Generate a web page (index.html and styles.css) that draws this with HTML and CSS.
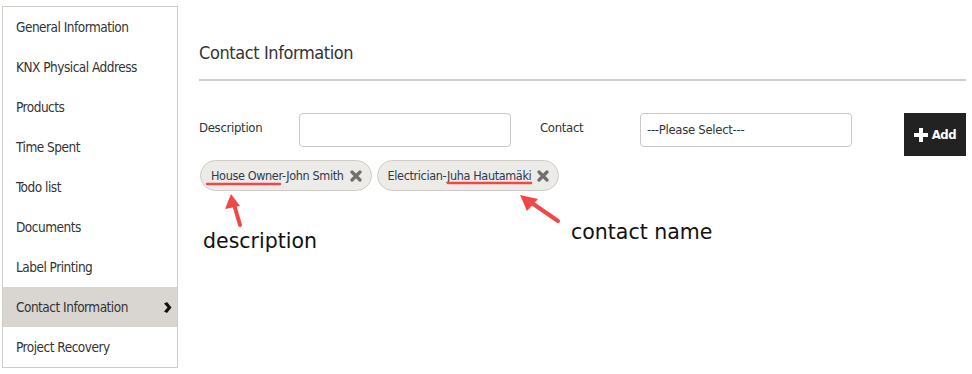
FILE: index.html
```html
<!DOCTYPE html>
<html lang="en">
<head>
    <meta charset="UTF-8">
    <title>Contact Information</title>
    <link rel="stylesheet" href="styles.css">
</head>
<body>
    <div class="page">
        <ul class="side-menu">
            <li>General Information</li>
            <li>KNX Physical Address</li>
            <li>Products</li>
            <li>Time Spent</li>
            <li>Todo list</li>
            <li>Documents</li>
            <li>Label Printing</li>
            <li class="active">Contact Information <span class="chevron">
                <svg width="9" height="11" viewBox="0 0 9 11"><path d="M1 1.5 L4 0 L8.5 5.5 L4 11 L1 9.5 L4.5 5.5 Z" fill="#111"/></svg>
            </span></li>
            <li>Project Recovery</li>
        </ul>
        <div class="content">
            <h2 class="title">Contact Information</h2>
            <div class="form-row">
                <label class="field-label">Description</label>
                <input type="text" class="field">
                <label class="field-label contact-label">Contact</label>
                <div class="field select">---Please Select---</div>
                <button class="add-button">
                    <svg width="14" height="14" viewBox="0 0 14 14"><path d="M5 0 H9 V5 H14 V9 H9 V14 H5 V9 H0 V5 H5 Z" fill="#fff"/></svg>
                    Add
                </button>
            </div>
            <div class="tags">
                <span class="tag">House Owner-John Smith
                    <svg class="tag-x" width="12" height="12" viewBox="0 0 12 12"><path d="M2 2 L10 10 M10 2 L2 10" stroke="#6f6f6f" stroke-width="3.2" stroke-linecap="round"/></svg>
                </span>
                <span class="tag">Electrician-Juha Hautamäki
                    <svg class="tag-x" width="12" height="12" viewBox="0 0 12 12"><path d="M2 2 L10 10 M10 2 L2 10" stroke="#6f6f6f" stroke-width="3.2" stroke-linecap="round"/></svg>
                </span>
            </div>
        </div>
    </div>

    <svg class="marks" width="972" height="374" viewBox="0 0 972 374">
        <g stroke="#f04848" stroke-width="2.5" fill="none" stroke-linecap="round">
            <line x1="207" y1="184" x2="280" y2="184"/>
            <line x1="448" y1="183" x2="531" y2="183"/>
        </g>
        <g stroke="#f04848" stroke-width="4" fill="none" stroke-linecap="round">
            <line x1="240" y1="225" x2="233" y2="201"/>
            <line x1="558" y1="221" x2="529" y2="201"/>
        </g>
        <g fill="#f04848">
            <polygon points="231,194 225,209 240,206"/>
            <polygon points="520,195 527,211 538,199"/>
        </g>
    </svg>
    <div class="note note-desc">description</div>
    <div class="note note-contact">contact name</div>
</body>
</html>
```
FILE: styles.css
```css
body {
    margin: 0;
    font-family: "DejaVu Sans Condensed", "DejaVu Sans", sans-serif;
    color: #333;
    background: #fff;
    position: relative;
    width: 972px;
    height: 374px;
    overflow: hidden;
}
.page {
    display: flex;
    align-items: flex-start;
    padding: 6px 0 0 2px;
}
.side-menu {
    list-style: none;
    margin: 0;
    padding: 0;
    width: 176px;
    border: 1px solid #d0cdc8;
    box-sizing: border-box;
    font-size: 13.5px;
    letter-spacing: -0.5px;
}
.side-menu li {
    height: 40px;
    line-height: 40px;
    padding-left: 13px;
    position: relative;
}
.side-menu li.active {
    background-color: #d9d6d1;
}
.chevron {
    position: absolute;
    right: 5px;
    top: 1px;
}
.content {
    flex: 1;
    margin-left: 21px;
    margin-right: 6px;
}
.title {
    margin: 0;
    padding: 32px 0 0 0;
    height: 41px;
    font-size: 18px;
    letter-spacing: -0.4px;
    font-weight: normal;
    color: #333;
    border-bottom: 2px solid #d0ceca;
    line-height: 30px;
}
.form-row {
    display: flex;
    align-items: flex-start;
    margin-top: 32px;
}
.field-label {
    width: 100px;
    font-size: 13px;
    letter-spacing: -0.3px;
    line-height: 30px;
}
.contact-label {
    margin-left: 29px;
}
.field {
    width: 212px;
    height: 34px;
    border: 1px solid #c8c8c8;
    border-radius: 4px;
    box-sizing: border-box;
    padding: 0 8px;
    font-family: inherit;
    font-size: 13px;
    letter-spacing: -0.3px;
    color: #333;
}
.select {
    line-height: 32px;
    padding-left: 6px;
}
.add-button {
    margin-left: 52px;
    width: 62px;
    height: 43px;
    background-color: #222;
    color: #fff;
    border: none;
    font-family: inherit;
    font-weight: bold;
    font-size: 13px;
    letter-spacing: -0.4px;
    display: flex;
    align-items: center;
    justify-content: center;
    gap: 4px;
    padding: 0;
}
.tags {
    display: flex;
    gap: 5px;
    margin-top: 4px;
    margin-left: 1px;
}
.tag {
    height: 31px;
    box-sizing: border-box;
    border: 1px solid #cfccc7;
    border-radius: 16px;
    background-color: #edebe8;
    padding: 0 9px 0 10px;
    font-size: 12.5px;
    letter-spacing: -0.35px;
    color: #2c3a4c;
    display: flex;
    align-items: center;
    gap: 6px;
}
.marks {
    position: absolute;
    left: 0;
    top: 0;
}
.note {
    position: absolute;
    font-family: "DejaVu Sans", sans-serif;
    font-size: 20.5px;
    color: #111;
}
.note-desc {
    left: 203px;
    top: 229px;
}
.note-contact {
    left: 571px;
    top: 220px;
}
```
